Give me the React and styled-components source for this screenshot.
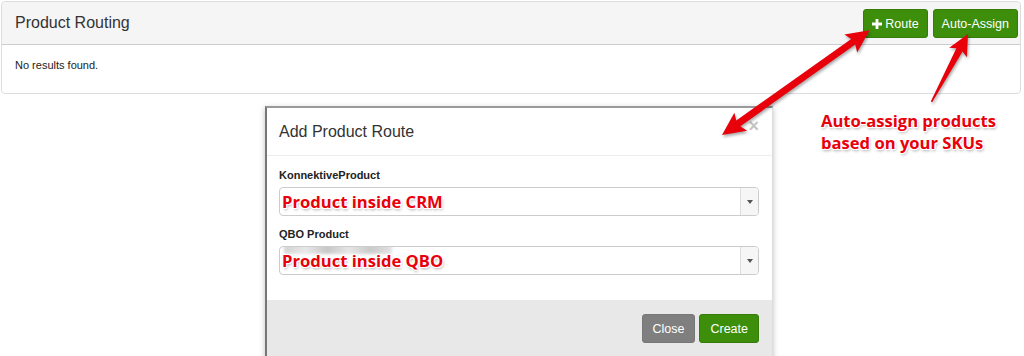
import React from 'react';
import styled, { createGlobalStyle } from 'styled-components';

const GlobalStyle = createGlobalStyle`
    html, body {
        margin: 0;
        padding: 0;
        background: #fff;
        font-family: "Liberation Sans", Arial, sans-serif;
        color: #333;
    }
`

const Page = styled.div`
    position: relative;
    width: 1024px;
    height: 356px;
    overflow: hidden;
    padding: 1px 3px 0 1px;
    box-sizing: border-box;
`

const Panel = styled.div`
    border: 1px solid #ddd;
    border-radius: 4px;
    background: #fff;
`

const PanelHeader = styled.div`
    display: flex;
    align-items: center;
    justify-content: space-between;
    height: 42px;
    padding: 0 2px 0 13px;
    background: #f5f5f5;
    border-bottom: 1px solid #ccc;
    border-radius: 4px 4px 0 0;
`

const Title = styled.h3`
    margin: 0;
    font-size: 16px;
    font-weight: 400;
    color: #333;
`

const Actions = styled.div`
    display: flex;
    gap: 5px;
    padding-top: 1px;
`

const Button = styled.button`
    height: 29px;
    padding: 0 ${p => p.$wide ? '10px' : '8px'};
    border: 1px solid ${p => p.$variant === 'grey' ? '#777' : '#357c09'};
    border-radius: 3px;
    background: ${p => p.$variant === 'grey' ? '#7f7f7f' : '#3d8e0b'};
    color: #fff;
    font-family: "Liberation Sans", Arial, sans-serif;
    font-size: 12.5px;
    display: flex;
    align-items: center;
    gap: 3px;
`

const PanelBody = styled.div`
    padding: 14px 13px 22px;
    font-size: 11px;
    color: #222;
`

const Modal = styled.div`
    margin: 12px 0 0 264px;
    width: 505px;
    background: #fff;
    border-top: 2px solid #9a9a9a;
    border-left: 2px solid #777;
    border-right: 1px solid #ddd;
    box-shadow: 0 2px 6px rgba(0, 0, 0, 0.25);
`

const ModalHeader = styled.div`
    display: flex;
    align-items: center;
    justify-content: space-between;
    height: 47px;
    padding: 0 13px 0 12px;
    border-bottom: 1px solid #eee;
`

const ModalTitle = styled.h4`
    margin: 0;
    font-size: 16px;
    font-weight: 400;
    color: #333;
`

const CloseX = styled.span`
    font-size: 18px;
    color: #c4c4c4;
    margin-top: -10px;
    font-weight: 700;
`

const ModalBody = styled.div`
    padding: 13px 13px 25px 12px;
    display: flex;
    flex-direction: column;
`

const Label = styled.label`
    font-size: 11px;
    font-weight: 700;
    color: #222;
    margin: 0 0 6px;
    margin-top: ${p => p.$first ? '0' : '12px'};
`

const SelectBox = styled.div`
    position: relative;
    display: flex;
    align-items: center;
    height: 27px;
    border: 1px solid #ccc;
    border-radius: 4px;
    background: #fff;
    overflow: hidden;
`

const SelectText = styled.div`
    flex: 1;
    position: relative;
    padding-left: 2px;
`

const Caret = styled.div`
    width: 17px;
    height: 100%;
    border-left: 1px solid #ddd;
    background: #f6f6f6;
    display: flex;
    align-items: center;
    justify-content: center;
    &:after {
        content: "";
        border-left: 3px solid transparent;
        border-right: 3px solid transparent;
        border-top: 4px solid #555;
    }
`

const Blur = styled.div`
    position: absolute;
    left: 4px;
    top: -6px;
    width: 108px;
    height: 10px;
    background: linear-gradient(90deg, #c8c8c8, #e3e3e3 20%, #b9b9b9 40%, #e0e0e0 60%, #bdbdbd 80%, #dcdcdc);
    filter: blur(1.5px);
    opacity: 0.8;
`

const Note = styled.span`
    position: relative;
    font-family: "Open Sans", sans-serif;
    font-weight: 700;
    font-size: 16.6px;
    line-height: 22px;
    color: #e8000b;
    text-shadow:
        -1px -1px 0 #fff, 1px -1px 0 #fff, -1px 1px 0 #fff, 1px 1px 0 #fff,
        0 0 2px #fff, 1px 2px 3px rgba(0, 0, 0, 0.35);
`

const ModalFooter = styled.div`
    display: flex;
    justify-content: flex-end;
    gap: 4px;
    padding: 14px 13px 20px;
    background: #e8e8e8;
`

const Callout = styled.div`
    position: absolute;
    left: 821px;
    top: 110px;
    display: flex;
    flex-direction: column;
`

const Arrows = styled.svg`
    position: absolute;
    left: 0;
    top: 0;
    pointer-events: none;
    filter: drop-shadow(1px 2px 1.5px rgba(0, 0, 0, 0.35));
`

function DoubleArrow({ x, y, angle, length }) {
    const L = length;
    const pts = `0,0 23,-11 20,-3.5 ${L - 20},-3.5 ${L - 23},-11 ${L},0 ${L - 23},11 ${L - 20},3.5 20,3.5 23,11`;
    return <polygon points={pts} transform={`translate(${x} ${y}) rotate(${angle})`} fill="#e8000b" />;
}

function SingleArrow({ x, y, angle, length }) {
    const L = length;
    const pts = `0,0 21,-10 18,-3.5 ${L},-0.8 ${L},0.8 18,3.5 21,10`;
    return <polygon points={pts} transform={`translate(${x} ${y}) rotate(${angle})`} fill="#e8000b" />;
}

export default function App() {
    return (
        <Page>
            <GlobalStyle />
            <Panel>
                <PanelHeader>
                    <Title>Product Routing</Title>
                    <Actions>
                        <Button>
                            <svg width="10" height="10" viewBox="0 0 10 10">
                                <path d="M3.6 0h2.8v3.6H10v2.8H6.4V10H3.6V6.4H0V3.6h3.6z" fill="#fff" />
                            </svg>
                            Route
                        </Button>
                        <Button>Auto-Assign</Button>
                    </Actions>
                </PanelHeader>
                <PanelBody>No results found.</PanelBody>
            </Panel>

            <Modal>
                <ModalHeader>
                    <ModalTitle>Add Product Route</ModalTitle>
                    <CloseX>×</CloseX>
                </ModalHeader>
                <ModalBody>
                    <Label $first>KonnektiveProduct</Label>
                    <SelectBox>
                        <SelectText><Note>Product inside CRM</Note></SelectText>
                        <Caret />
                    </SelectBox>
                    <Label>QBO Product</Label>
                    <SelectBox>
                        <SelectText>
                            <Blur />
                            <Note>Product inside QBO</Note>
                        </SelectText>
                        <Caret />
                    </SelectBox>
                </ModalBody>
                <ModalFooter>
                    <Button $variant="grey" $wide>Close</Button>
                    <Button $wide>Create</Button>
                </ModalFooter>
            </Modal>

            <Callout>
                <Note>Auto-assign products</Note>
                <Note>based on your SKUs</Note>
            </Callout>

            <Arrows width="1024" height="356">
                <DoubleArrow x={722} y={135} angle={-35.4} length={181} />
                <SingleArrow x={968} y={34} angle={118.3} length={77} />
            </Arrows>
        </Page>
    );
}
